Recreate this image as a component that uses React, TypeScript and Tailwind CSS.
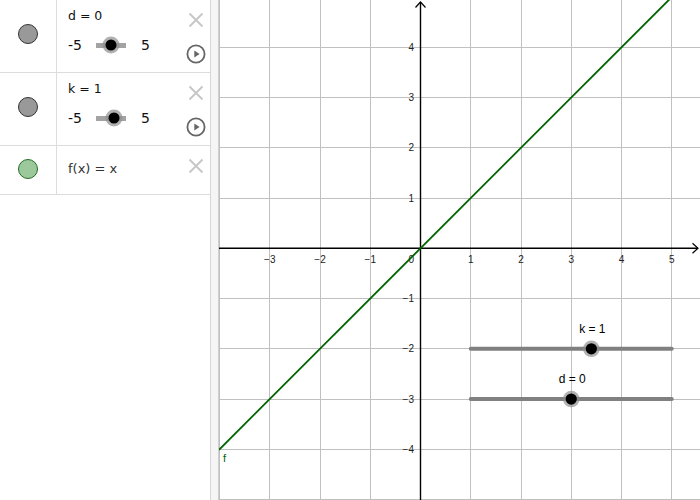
import React from "react";

const ox = 420.5;
const oy = 248.3;
const u = 50.25;

const px = (v: number) => ox + v * u;
const py = (v: number) => oy - v * u;
const crisp = (v: number) => Math.round(v - 0.5) + 0.5;

const xTicks = [-4, -3, -2, -1, 1, 2, 3, 4, 5];
const yTicks = [4, 3, 2, 1, -1, -2, -3, -4, -5];

function fmt(n: number) {
  return n < 0 ? `\u2212${Math.abs(n)}` : `${n}`;
}

function CloseIcon() {
  return (
    <svg width="16" height="16" viewBox="0 0 16 16">
      <path d="M1.5 1.5 L14.5 14.5 M14.5 1.5 L1.5 14.5" stroke="#c6c6c6" strokeWidth="1.8" fill="none" />
    </svg>
  );
}

function PlayIcon() {
  return (
    <svg width="20" height="20" viewBox="0 0 20 20">
      <circle cx="10" cy="10" r="8.6" stroke="#666" strokeWidth="1.8" fill="none" />
      <path d="M8.3 6.6 L13.6 10 L8.3 13.4 Z" fill="#666" />
    </svg>
  );
}

function MiniSlider({ value }: { value: number }) {
  const left = ((value + 5) / 10) * 30;
  return (
    <div className="relative h-[5px] w-[30px] bg-[#a3a3a3]">
      <div
        className="absolute top-1/2 flex h-[17px] w-[17px] -translate-x-1/2 -translate-y-1/2 items-center justify-center rounded-full bg-[#8f8f8f]/70"
        style={{ left }}
      >
        <div className="h-[11px] w-[11px] rounded-full bg-black" />
      </div>
    </div>
  );
}

function SliderRow({ name, value }: { name: string; value: number }) {
  return (
    <div className="flex h-[73px] border-b border-[#dcdcdc]">
      <div className="flex w-[57px] justify-center border-r border-[#dcdcdc] pt-[24px]">
        <div className="h-5 w-5 rounded-full border border-[#333] bg-[#999]" />
      </div>
      <div className="flex-1 pl-[11px] pt-[9px] font-['DejaVu_Sans',sans-serif] text-[#111]">
        <div className="text-[12.5px] leading-[14px]">
          {name} = {value}
        </div>
        <div className="mt-[12px] flex h-[20px] items-center text-[14px]">
          <span className="w-[28px]">-5</span>
          <MiniSlider value={value} />
          <span className="ml-[15px]">5</span>
        </div>
      </div>
      <div className="flex w-[28px] flex-col items-center pt-[12px]">
        <CloseIcon />
        <div className="mt-[16px]">
          <PlayIcon />
        </div>
      </div>
    </div>
  );
}

function FunctionRow() {
  return (
    <div className="flex h-[49px] border-b border-[#dcdcdc]">
      <div className="flex w-[57px] items-center justify-center border-r border-[#dcdcdc]">
        <div className="mt-[-2px] h-5 w-5 rounded-full border border-[#236f23] bg-[#9cc99c]" />
      </div>
      <div className="flex flex-1 items-center pl-[11px] pb-[2px] font-['DejaVu_Sans',sans-serif] text-[13px] text-[#333]">
        f(x) = x
      </div>
      <div className="flex w-[28px] flex-col items-center pt-[12px]">
        <CloseIcon />
      </div>
    </div>
  );
}

function GraphSlider({ y, value, label }: { y: number; value: number; label: string }) {
  const x0 = px(1);
  const x1 = px(5);
  const cx = x0 + ((value + 5) / 10) * (x1 - x0);
  return (
    <g>
      <line x1={x0} y1={y} x2={x1} y2={y} stroke="#808080" strokeWidth="4" strokeLinecap="round" />
      <circle cx={cx} cy={y} r="8.3" fill="#8a8a8a" fillOpacity="0.65" />
      <circle cx={cx} cy={y} r="5.6" fill="#000" />
      <text x={cx + 1} y={y - 16} textAnchor="middle" fontSize="12" fontFamily="Liberation Sans, Arial, sans-serif" fill="#000">
        {label}
      </text>
    </g>
  );
}

function Graph() {
  return (
    <svg width="481" height="500" viewBox="219 0 481 500" className="block">
      <rect x="219" y="0" width="481" height="500" fill="#fff" />
      {xTicks.map((k) => (
        <line key={`gx${k}`} x1={crisp(px(k))} y1="0" x2={crisp(px(k))} y2="500" stroke="#c0c0c0" strokeWidth="1" />
      ))}
      {yTicks.map((k) => (
        <line key={`gy${k}`} x1="219" y1={crisp(py(k))} x2="700" y2={crisp(py(k))} stroke="#c0c0c0" strokeWidth="1" />
      ))}

      {/* axes */}
      <line x1="219" y1={oy} x2="698" y2={oy} stroke="#000" strokeWidth="1.4" />
      <path d={`M692.5 ${oy - 5} L698 ${oy} L692.5 ${oy + 5}`} stroke="#000" strokeWidth="1.2" fill="none" />
      <line x1={ox} y1="2" x2={ox} y2="500" stroke="#000" strokeWidth="1.4" />
      <path d={`M${ox - 5} 7.5 L${ox} 2 L${ox + 5} 7.5`} stroke="#000" strokeWidth="1.2" fill="none" />

      <g fontSize="10" fontFamily="Liberation Sans, Arial, sans-serif" fill="#222">
        {xTicks
          .filter((k) => k > -4)
          .map((k) => (
            <text key={`lx${k}`} x={px(k)} y={oy + 15} textAnchor="middle">
              {fmt(k)}
            </text>
          ))}
        <text x={ox - 6.5} y={oy + 15} textAnchor="end">
          0
        </text>
        {yTicks
          .filter((k) => k > -5)
          .map((k) => (
            <text key={`ly${k}`} x={ox - 6.5} y={py(k) + 3.6} textAnchor="end">
              {fmt(k)}
            </text>
          ))}
      </g>

      {/* f(x) = x */}
      <line x1="219" y1={oy + (ox - 219)} x2="700" y2={oy - (700 - ox)} stroke="#006400" strokeWidth="1.8" />
      <text x="223" y="462" fontSize="11" fontFamily="Liberation Sans, Arial, sans-serif" fill="#006400">
        f
      </text>

      <GraphSlider y={py(-2)} value={1} label="k = 1" />
      <GraphSlider y={py(-3)} value={0} label="d = 0" />
    </svg>
  );
}

export default function App() {
  return (
    <div className="flex h-[500px] w-[700px] overflow-hidden bg-white">
      <div className="w-[211px] shrink-0 border-r border-[#d6d6d6]">
        <SliderRow name="d" value={0} />
        <SliderRow name="k" value={1} />
        <FunctionRow />
      </div>
      <div className="w-[8px] shrink-0 border-r border-[#d0d0d0] bg-[#f5f5f5]" />
      <Graph />
    </div>
  );
}
